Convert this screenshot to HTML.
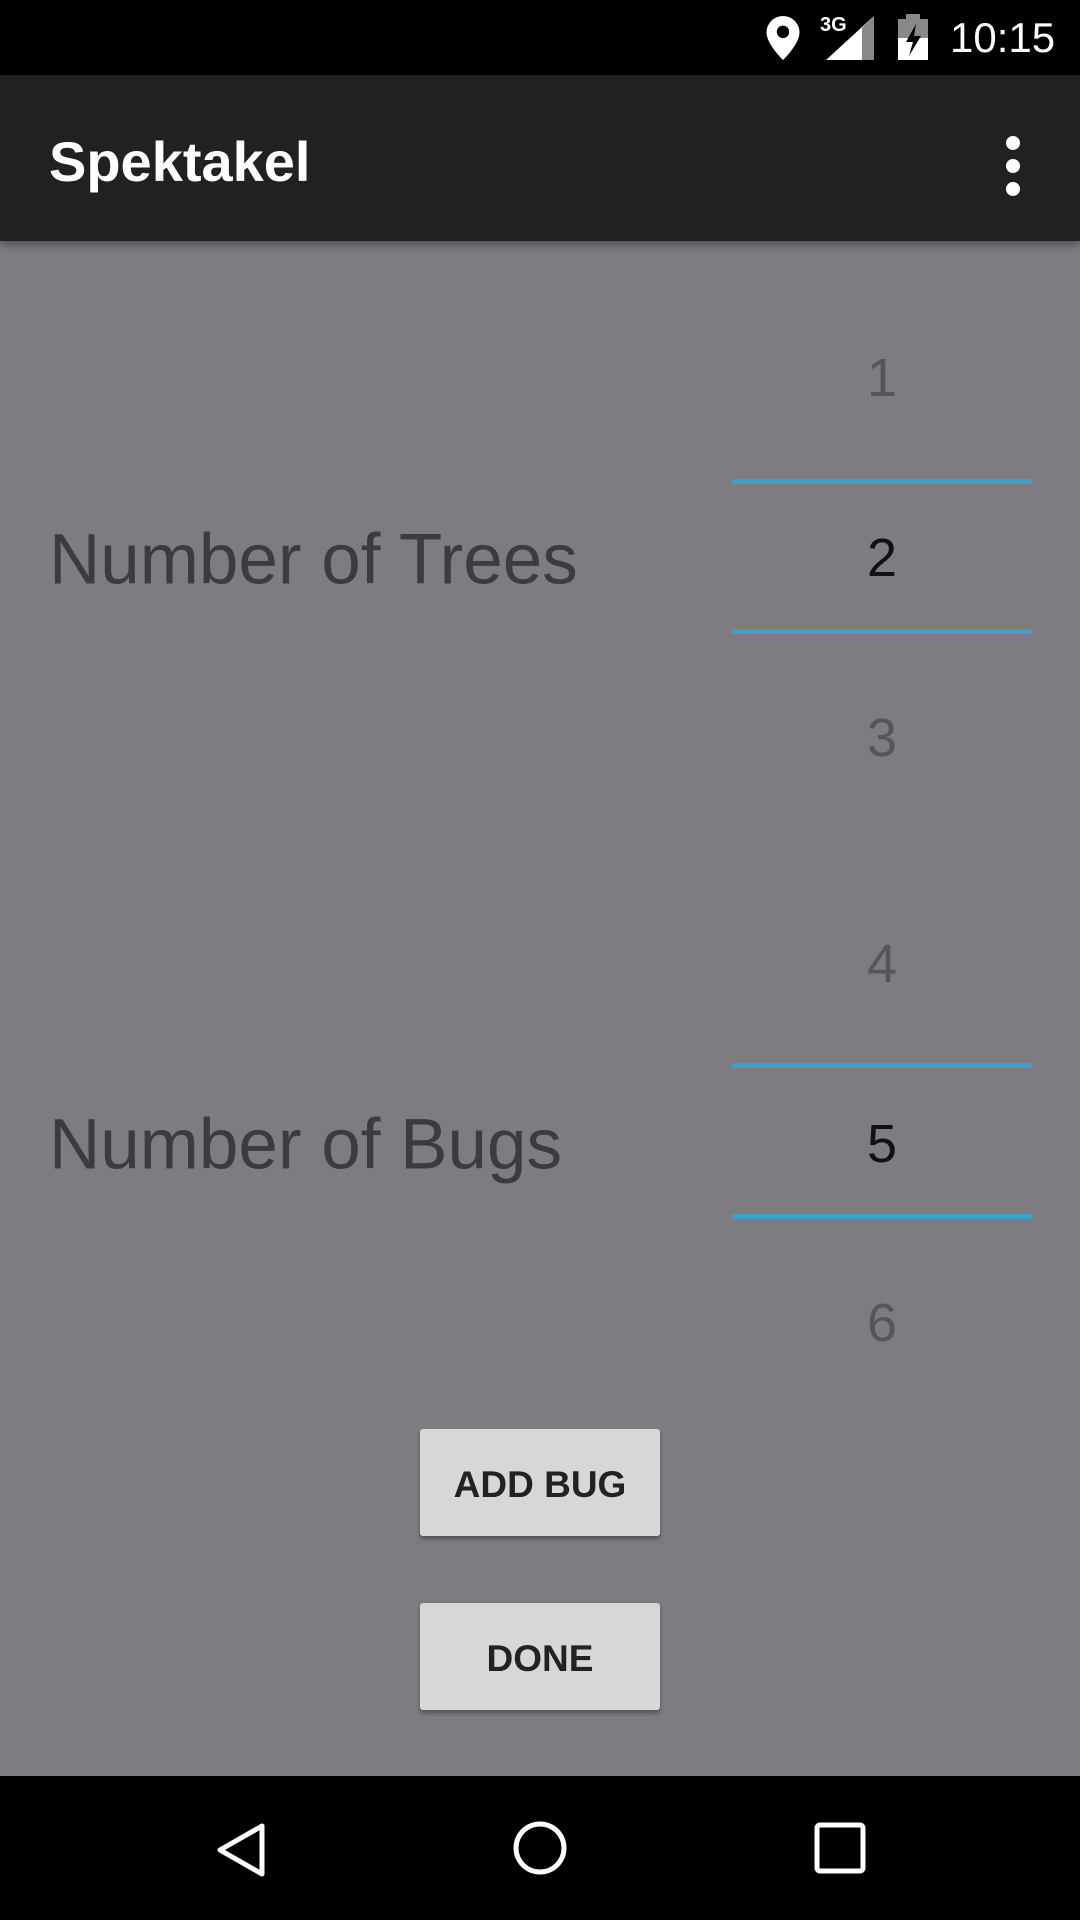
<!DOCTYPE html>
<html><head><meta charset="utf-8"><style>
*{margin:0;padding:0;box-sizing:border-box}
body{width:1080px;height:1920px;background:#7e7c81;font-family:"Liberation Sans",sans-serif;position:relative;overflow:hidden}
.abs{position:absolute}
#sb{left:0;top:0;width:1080px;height:75px;background:#000}
#ab{left:0;top:75px;width:1080px;height:166px;background:#212121;box-shadow:0 4px 8px rgba(0,0,0,.35)}
#nav{left:0;top:1776px;width:1080px;height:144px;background:#000}
.lbl{left:49px;font-size:71px;color:#3c3b3e;line-height:1;transform:translateY(-50%)}
.num{left:732px;width:300px;text-align:center;font-size:54px;line-height:1;transform:translateY(-50%)}
.dim{color:#56555a}.sel{color:#111}
.line{left:732px;width:300px;height:5px;background:#3f9fc8}
.btn{left:420px;width:240px;height:107px;background:#d6d7d7;border-radius:3px;box-shadow:0 3px 4px rgba(0,0,0,.35);font-weight:bold;font-size:37px;color:#222;display:flex;align-items:center;justify-content:center;padding-top:4px}
</style></head><body>
<div id="sb" class="abs">
<svg class="abs" style="left:766px;top:16px" width="34" height="44" viewBox="0 0 24 32"><path d="M12 0C5.5 0 0 5.3 0 12c0 8.5 12 20 12 20s12-11.5 12-20C24 5.3 18.5 0 12 0z" fill="#fff"/><circle cx="12" cy="11.5" r="4.5" fill="#000"/></svg>
<div class="abs" style="left:820px;top:14px;color:#fff;font-size:20px;font-weight:bold">3G</div>
<svg class="abs" style="left:826px;top:16px" width="48" height="44"><polygon points="48,0 48,44 0,44" fill="#fff"/><polygon points="36,12 48,0 48,44 36,44" fill="#888"/></svg>
<svg class="abs" style="left:898px;top:14px" width="30" height="46"><rect x="8" y="0" width="14" height="6" fill="#888"/><rect x="0" y="5" width="30" height="41" fill="#888"/><rect x="0" y="24" width="30" height="22" fill="#fff"/><path d="M18 10 L8 28 H15 L11 42 L23 22 H16 Z" fill="#000"/></svg>
<div class="abs" style="left:950px;top:14px;color:#fff;font-size:42px">10:15</div>
</div>
<div id="ab" class="abs">
<div class="abs" style="left:49px;top:59px;color:#fff;font-size:56px;font-weight:bold;line-height:1">Spektakel</div>
<div class="abs" style="left:1006px;top:61px;width:14px;height:14px;border-radius:50%;background:#fff"></div>
<div class="abs" style="left:1006px;top:84px;width:14px;height:14px;border-radius:50%;background:#fff"></div>
<div class="abs" style="left:1006px;top:107px;width:14px;height:14px;border-radius:50%;background:#fff"></div>
</div>
<div class="abs lbl" style="top:560px">Number of Trees</div>
<div class="abs num dim" style="top:378px">1</div>
<div class="abs line" style="top:479px"></div>
<div class="abs num sel" style="top:558px">2</div>
<div class="abs line" style="top:629px"></div>
<div class="abs num dim" style="top:738px">3</div>
<div class="abs lbl" style="top:1145px">Number of Bugs</div>
<div class="abs num dim" style="top:964px">4</div>
<div class="abs line" style="top:1063px"></div>
<div class="abs num sel" style="top:1144px">5</div>
<div class="abs line" style="top:1214px"></div>
<div class="abs num dim" style="top:1323px">6</div>
<div class="abs btn" style="top:1429px">ADD BUG</div>
<div class="abs btn" style="top:1603px">DONE</div>
<div id="nav" class="abs">
<svg class="abs" style="left:212px;top:44px" width="60" height="60"><polygon points="8,30 50,6 50,54" fill="none" stroke="#fff" stroke-width="5" stroke-linejoin="round"/></svg>
<svg class="abs" style="left:510px;top:42px" width="60" height="60"><circle cx="30" cy="30" r="24" fill="none" stroke="#fff" stroke-width="5"/></svg>
<svg class="abs" style="left:812px;top:44px" width="56" height="56"><rect x="5" y="5" width="46" height="46" rx="3" fill="none" stroke="#fff" stroke-width="5"/></svg>
</div>
</body></html>
